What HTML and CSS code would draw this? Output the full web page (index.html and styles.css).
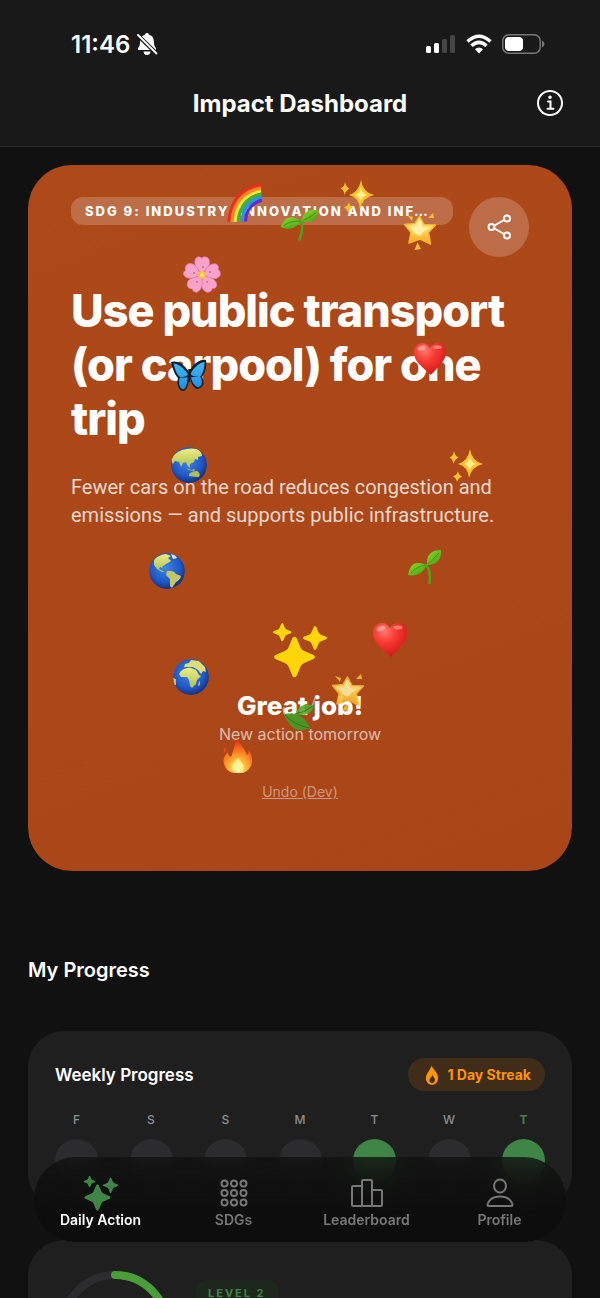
FILE: index.html
```html
<!DOCTYPE html>
<html lang="en">
<head>
    <meta charset="UTF-8">
    <meta name="viewport" content="width=device-width, initial-scale=1.0">
    <title>Impact Dashboard</title>
    <link rel="stylesheet" href="styles.css">
</head>
<body>
    <!-- shared shapes -->
    <svg class="defs" aria-hidden="true">
        <defs>
            <linearGradient id="gold" x1="0" y1="0" x2="0" y2="1">
                <stop offset="0" stop-color="#fff3b8"/>
                <stop offset=".5" stop-color="#ffd95a"/>
                <stop offset="1" stop-color="#f7a51c"/>
            </linearGradient>
            <radialGradient id="sea" cx=".45" cy=".4" r=".6">
                <stop offset="0" stop-color="#3f86e8"/>
                <stop offset=".7" stop-color="#1f56c4"/>
                <stop offset="1" stop-color="#14317e"/>
            </radialGradient>
            <linearGradient id="land" x1="0" y1="0" x2="0" y2="1">
                <stop offset="0" stop-color="#f0ee7e"/>
                <stop offset="1" stop-color="#a9bd5a"/>
            </linearGradient>
            <radialGradient id="red" cx=".35" cy=".25" r=".8">
                <stop offset="0" stop-color="#ff7a6e"/>
                <stop offset=".4" stop-color="#f93b33"/>
                <stop offset="1" stop-color="#cf1417"/>
            </radialGradient>
            <linearGradient id="leafgreen" x1="0" y1="0" x2="1" y2="1">
                <stop offset="0" stop-color="#8fdc2c"/>
                <stop offset="1" stop-color="#3f9c12"/>
            </linearGradient>
            <radialGradient id="fire" cx=".5" cy=".9" r=".85">
                <stop offset="0" stop-color="#fffbc0"/>
                <stop offset=".3" stop-color="#ffc43a"/>
                <stop offset=".65" stop-color="#fb7a20"/>
                <stop offset="1" stop-color="#ea3417"/>
            </radialGradient>
            <linearGradient id="wing" x1="0" y1="0" x2="0" y2="1">
                <stop offset="0" stop-color="#45b9f5"/>
                <stop offset="1" stop-color="#1c8de0"/>
            </linearGradient>
            <clipPath id="round"><circle cx="18" cy="18" r="18"/></clipPath>
        </defs>
        <symbol id="star4" viewBox="-20 -20 40 40">
            <path d="M-2-18.500Q0-21.500 2-18.500L6-9Q7-7 9-6L18.500-2Q21.500 0 18.500 2L9 6Q7 7 6 9L2 18.500Q0 21.500-2 18.500L-6 9Q-7 7-9 6L-18.500 2Q-21.500 0-18.500-2L-9-6Q-7-7-6-9Z"/>
        </symbol>
        <symbol id="sparkles" viewBox="0 0 56 56">
            <use href="#star4" x="2" y="14.500" width="41" height="41"/>
            <use href="#star4" x="1" y="1" width="18.500" height="18.500"/>
            <use href="#star4" x="31" y="4" width="24" height="24"/>
        </symbol>
        <symbol id="glitter" viewBox="0 0 36 36">
            <g fill="#ffc02e">
                <path d="M21 0Q22.500 12 34 15Q23 17 20 29Q19 17.500 9 15Q19 12 21 0Z"/>
                <path d="M5 2Q6 7 9.500 8.500Q6 10 4.500 15Q4 10 .5 8.500Q4.500 7 5 2Z"/>
                <path d="M9 22Q9.500 26 13 27.500Q9.500 29 8 33Q7.500 29 4 27.500Q8 26 9 22Z"/>
            </g>
            <path fill="#fff08a" d="M21 7Q21.500 13 27 15Q21.500 16.500 20.500 22Q19.500 16.500 15 15Q20 13 21 7Z"/>
        </symbol>
        <symbol id="heart" viewBox="0 0 36 36">
            <path fill="url(#red)" d="M19 35C14 29 1 22 1 11C1 5 5 1 9.500 1C13 1 16.500 3 18 6.500C19.500 3 23 1 26.500 1C31 1 35 5 35 11C35 21 24 28 19 35Z"/>
            <ellipse cx="9" cy="6.500" rx="4.500" ry="2.500" fill="#ffb5ac" opacity=".7" transform="rotate(-20 9 6.500)"/>
            <ellipse cx="26" cy="5.500" rx="4.500" ry="2" fill="#ffb5ac" opacity=".55"/>
        </symbol>
        <symbol id="seedling" viewBox="0 0 36 36">
            <path fill="none" stroke="#4da31b" stroke-width="2.500" stroke-linecap="round" d="M19 16Q24 20 22.500 34"/>
            <path fill="url(#leafgreen)" d="M19.500 16C7 11 3 16 1 26C10 28 16 24 19.500 16Z"/>
            <path fill="url(#leafgreen)" d="M20 16C19 5 25 1 34 1C35 11 29 16 20 16Z"/>
            <path fill="none" stroke="#2f870e" stroke-width=".7" d="M19 16Q10 17 4 24M21 15Q26 11 32 4"/>
        </symbol>
        <symbol id="glowstar" viewBox="0 0 36 38">
            <path fill="url(#gold)" stroke="#f9b52e" stroke-width="1.500" stroke-linejoin="round" d="M17.500 4L22 12.500L33.500 13L26.500 20.500L28.500 32L18 27L7 31L9 20.500L2.500 12.500L13 11.500Z"/>
            <path fill="#fff5bd" d="M17.500 8L20 15L27 16L21.500 20L18 24L12 21L9 15L15 14Z" opacity=".8"/>
            <g fill="#ffbb3c"><path d="M5 3L11 5L10 9Z"/><path d="M26 6L31 1L32 6Z"/><path d="M12.500 38L15.500 30.500L19 37Z"/></g>
        </symbol>
        <symbol id="flame" viewBox="0 0 512 512">
            <path d="M250 10C262 95 398 178 410 306C420 436 342 506 256 506C170 506 92 436 102 312C108 240 140 210 170 165C196 120 222 65 250 10ZM258 462C308 462 336 416 326 366C318 322 286 304 270 258C254 306 204 330 194 376C184 424 214 462 258 462Z" fill-rule="evenodd"/>
        </symbol>
    </svg>

    <div class="app">
        <header class="top">
            <div class="status">
                <div class="status-left">
                    <span class="time">11:46</span>
                    <svg width="22" height="22" viewBox="0 0 22 22">
                        <path fill="#fff" d="M11 0C12.500 0 13 1 13 1.700C16.500 2.600 17.700 5 17.900 8.500C18.100 12.500 18.500 13.500 20 15V17H2V15C3.500 13.500 3.900 12.500 4.100 8.500C4.300 5 5.500 2.600 9 1.700C9 1 9.500 0 11 0ZM7.500 18.500H14.500Q14 22 11 22Q8 22 7.500 18.500Z"/>
                        <path stroke="#191919" stroke-width="4" d="M1.500 2L20 20"/>
                        <path stroke="#fff" stroke-width="1.800" stroke-linecap="round" d="M2 2L20.500 20.500"/>
                    </svg>
                </div>
                <div class="status-right">
                    <svg width="30" height="20" viewBox="0 0 30 20">
                        <g fill="#fff"><rect x="0" y="12" width="5" height="7" rx="1.500"/><rect x="8" y="9" width="5" height="10" rx="1.500"/></g>
                        <g fill="#464646"><rect x="16" y="5" width="5" height="14" rx="1.500"/><rect x="24" y="1" width="5" height="18" rx="1.500"/></g>
                    </svg>
                    <svg width="26" height="20" viewBox="0 0 26 20">
                        <g fill="none" stroke="#fff" stroke-width="3.500"><path d="M1.500 7.500Q13-3 24.500 7.500"/><path d="M5.500 11.800Q13 5 20.500 11.800"/></g>
                        <path fill="#fff" d="M9 15.300Q13 11.700 17 15.300L13 19.500Z"/>
                    </svg>
                    <svg width="43" height="20" viewBox="0 0 43 20">
                        <rect x=".75" y=".75" width="37.500" height="18.500" rx="6" fill="none" stroke="#777" stroke-width="1.500"/>
                        <rect x="3" y="3" width="18" height="14" rx="4" fill="#fff"/>
                        <path fill="#777" d="M40 6.500Q42.500 7.500 42.500 10T40 13.500Z"/>
                    </svg>
                </div>
            </div>
            <div class="title-bar">
                <h1>Impact Dashboard</h1>
                <button class="info" aria-label="Info">
                    <svg width="28" height="28" viewBox="0 0 28 28" fill="none" stroke="#fff" stroke-width="2" stroke-linecap="round">
                        <circle cx="14" cy="14" r="12"/>
                        <path d="M12 12.500H14.500V19.500M11.500 19.800H17.500"/>
                        <circle cx="14" cy="8.300" r=".8" fill="#fff"/>
                    </svg>
                </button>
            </div>
        </header>

        <main>
            <section class="action-card">
                <div class="card-head">
                    <span class="badge">SDG 9: INDUSTRY, INNOVATION AND INF…</span>
                    <button class="share" aria-label="Share">
                        <svg width="26" height="26" viewBox="-1 0 26 26" fill="none" stroke="#fff" stroke-width="2">
                            <circle cx="4.500" cy="13" r="3"/><circle cx="20" cy="4.500" r="3"/><circle cx="20" cy="21.500" r="3"/>
                            <path d="M7.500 11.500L17 6M7.500 14.500L17 20"/>
                        </svg>
                    </button>
                </div>
                <h2>Use public transport (or carpool) for one trip</h2>
                <p class="desc">Fewer cars on the road reduces congestion and emissions — and supports public infrastructure.</p>
                <div class="done">
                    <svg class="done-icon" width="56" height="56"><use href="#sparkles"/></svg>
                    <strong>Great job!</strong>
                    <span>New action tomorrow</span>
                    <button class="undo">Undo (Dev)</button>
                </div>

                <!-- confetti floating over the card -->
                <div class="confetti" aria-hidden="true">
                    <svg class="c-rainbow" width="36" height="42" viewBox="0 0 36 42" fill="none" stroke-width="3.200">
                        <path stroke="#ee2b22" d="M2 40Q4 8 34 3"/>
                        <path stroke="#fb8a1e" d="M5 40Q7 11 34 6"/>
                        <path stroke="#fde338" d="M8 40Q10 14 34 9"/>
                        <path stroke="#35b837" d="M11.500 39.500Q13 17 34.500 12"/>
                        <path stroke="#2596ea" d="M15 39.500Q16 20 35 15"/>
                        <path stroke="#5a2fd6" d="M18.500 39.500Q19 23 35 18"/>
                    </svg>
                    <svg class="c-seed-a" width="36" height="36"><use href="#seedling"/></svg>
                    <svg class="c-glitter-a" width="36" height="36"><use href="#glitter"/></svg>
                    <svg class="c-star-a" width="36" height="38"><use href="#glowstar"/></svg>
                    <svg class="c-flower" width="38" height="38" viewBox="-19 -19 38 38">
                        <g fill="#f9a3cb" stroke="#e67bb0" stroke-width=".7">
                            <path id="petal" d="M0-2C-6-6-9-12-6-17Q-3-19.500-.5-17Q3-19.500 6-17C10-12 6-6 0-2Z"/>
                            <use href="#petal" transform="rotate(72)"/>
                            <use href="#petal" transform="rotate(144)"/>
                            <use href="#petal" transform="rotate(216)"/>
                            <use href="#petal" transform="rotate(288)"/>
                        </g>
                        <g fill="#c2387e">
                            <circle cx="1" cy="-8" r=".8"/><circle cx="8" cy="-3" r=".8"/><circle cx="5" cy="7" r=".8"/><circle cx="-5" cy="7" r=".8"/><circle cx="-8" cy="-2" r=".8"/>
                        </g>
                        <circle r="4" fill="#f6bd47"/><circle r="2" fill="#ffe07a"/>
                    </svg>
                    <svg class="c-butterfly" width="38" height="34" viewBox="0 0 38 34">
                        <path fill="#10202e" d="M19 13C14 5 7 1 1 3C3 11 5 16 8 19C6 25 9 33 14 32C18 30 19 23 19.500 18C21 23 23 30 28 30C34 28 35 23 32 18C35 14 37 8 36 1C30 0 23 5 19 13Z"/>
                        <path fill="url(#wing)" d="M18 15C13 8 8 5 3.500 4.500C5 11 7 16 10 18C14 18 17 17.500 18 15ZM17.500 18C14 19 11 18 9.500 19C8 25 10 30 13.500 30.500C17 28 17.500 22 17.500 18ZM20.500 15C24 8 29 4 34.500 3C34.500 10 33 14 30 18C26 17.500 22 17.500 20.500 15ZM21 18C24 18.500 28 17 30.500 18C33 23 32 27 28 28.500C23 26 22 22 21 18Z"/>
                        <path fill="#17191c" d="M18.200 10L20.800 10L20.500 23L19 23Z"/>
                    </svg>
                    <svg class="c-heart-a" width="34" height="36"><use href="#heart"/></svg>
                    <svg class="c-asia" width="36" height="36" viewBox="0 0 36 36">
                        <g clip-path="url(#round)">
                            <circle cx="18" cy="18" r="18" fill="url(#sea)"/>
                            <path fill="url(#land)" d="M3 8Q12 0 26 2Q31 5 31 9L27 10L27 13L24 12L23 15L19 17L19 21L16 18L15 15L12 16L10 20L8 15L4 14L2 17L0 13Z"/>
                            <path fill="#b3bd56" d="M18 27Q21 24 26 24Q30 26 28 30Q23 30 18 29Z"/>
                            <path fill="#a6b55c" d="M16 21L20 23L24 22L23 24L17 23Z"/>
                        </g>
                    </svg>
                    <svg class="c-glitter-b" width="36" height="36"><use href="#glitter"/></svg>
                    <svg class="c-america" width="36" height="36" viewBox="0 0 36 36">
                        <g clip-path="url(#round)">
                            <circle cx="18" cy="18" r="18" fill="url(#sea)"/>
                            <path fill="url(#land)" d="M5 7Q9 2 17 1L22 3L19 5L22 8L17 11L14 13L13 15L11 14L10 16L14 18L16 19L13 19L8 16L5 12Z"/>
                            <path fill="#c3c765" d="M18 18Q24 17 27 21L32 23Q31 27 27 29L23 35L21 33L21 26L17 22Z"/>
                            <path fill="#dfe9c5" d="M22 1Q27 2 28 5L24 6Z"/>
                        </g>
                    </svg>
                    <svg class="c-seed-b" width="36" height="36"><use href="#seedling"/></svg>
                    <svg class="c-heart-b" width="36" height="36"><use href="#heart"/></svg>
                    <svg class="c-africa" width="36" height="36" viewBox="0 0 36 36">
                        <g clip-path="url(#round)">
                            <circle cx="18" cy="18" r="18" fill="url(#sea)"/>
                            <path fill="url(#land)" d="M8 12Q13 8 18 9L23 11L26 16L28 17L24 21L23 25L19 29L17 27L16 21L14 18L8 18L6 15Z"/>
                            <path fill="#dcdf79" d="M11 8L12 5L16 4L18 1L26 2L32 8L33 13L30 12L28 15L25 11L20 8L15 8Z"/>
                            <path fill="#bcc65f" d="M0 19L3 20L3 26L1 26ZM26 23L27 22L27 26L25 27Z"/>
                        </g>
                    </svg>
                    <svg class="c-star-b" width="36" height="38"><use href="#glowstar"/></svg>
                    <svg class="c-leaves" width="36" height="36" viewBox="0 0 36 36">
                        <path fill="none" stroke="#b9b39a" stroke-width="1.500" d="M34 1Q32 8 29 13M3 10Q1 15 6 21"/>
                        <path fill="#57ab2f" d="M14 17Q20 4 33 9Q29 21 14 17Z"/>
                        <path fill="#449d28" d="M3 17Q21 13 29 31Q11 39 3 17Z"/>
                        <path fill="none" stroke="#2c7718" stroke-width="1" d="M14 17Q23 16 32 9M4 18Q13 28 28 31"/>
                    </svg>
                    <svg class="c-fire" width="30" height="36" viewBox="0 0 30 36">
                        <path fill="url(#fire)" d="M14 1C17 7 22 10 24 17Q26 15 26 12Q31 20 28 28Q24 36 15 35Q4 36 1 26Q-1 19 5 14Q5 18 8 19C11 12 11 7 14 1Z"/>
                        <path fill="#f04b20" d="M2 9Q4 12 1 15Q0 12 2 9Z"/>
                        <path fill="#fff6a0" opacity=".8" d="M15 20Q24 29 19 33Q14 35 10 32Q7 27 15 20Z"/>
                    </svg>
                </div>
            </section>

            <h3 class="section-title">My Progress</h3>

            <section class="panel weekly">
                <div class="weekly-head">
                    <h4>Weekly Progress</h4>
                    <span class="streak"><svg width="20" height="20" fill="#ff9500"><use href="#flame"/></svg>1 Day Streak</span>
                </div>
                <ul class="days">
                    <li>F<i></i></li>
                    <li>S<i></i></li>
                    <li>S<i></i></li>
                    <li>M<i></i></li>
                    <li class="hit">T<i></i></li>
                    <li>W<i></i></li>
                    <li class="hit today">T<i></i></li>
                </ul>
            </section>

            <section class="panel level">
                <svg width="120" height="120" viewBox="0 0 120 120" fill="none" stroke-width="8">
                    <circle cx="60" cy="60" r="52" stroke="#2c2c2e"/>
                    <path stroke="#4a9e38" stroke-linecap="round" d="M60 8A52 52 0 0 1 112 60"/>
                </svg>
                <span class="level-chip">LEVEL 2</span>
            </section>
        </main>

        <nav class="tabs">
            <a href="#" class="active">
                <svg width="36" height="36" fill="#3f8545"><use href="#sparkles"/></svg>
                Daily Action
            </a>
            <a href="#">
                <svg width="36" height="36" viewBox="0 0 36 36" fill="none" stroke="#777" stroke-width="2">
                    <circle cx="8.500" cy="8.500" r="3"/><circle cx="18" cy="8.500" r="3"/><circle cx="27.500" cy="8.500" r="3"/>
                    <circle cx="8.500" cy="18" r="3"/><circle cx="18" cy="18" r="3"/><circle cx="27.500" cy="18" r="3"/>
                    <circle cx="8.500" cy="27.500" r="3"/><circle cx="18" cy="27.500" r="3"/><circle cx="27.500" cy="27.500" r="3"/>
                </svg>
                SDGs
            </a>
            <a href="#">
                <svg width="36" height="36" viewBox="0 0 36 36" fill="none" stroke="#777" stroke-width="2" stroke-linejoin="round">
                    <rect x="3" y="11" width="10" height="20" rx="1"/><rect x="13" y="5" width="10" height="26" rx="1"/><rect x="23" y="15" width="10" height="16" rx="1"/>
                </svg>
                Leaderboard
            </a>
            <a href="#">
                <svg width="36" height="36" viewBox="0 0 36 36" fill="none" stroke="#777" stroke-width="2" stroke-linejoin="round">
                    <ellipse cx="18" cy="11" rx="6" ry="6.500"/>
                    <path d="M18 21.500C10 21.500 6 26 5.500 29.500Q5.500 31 7 31H29Q30.500 31 30.500 29.500C30 26 26 21.500 18 21.500Z"/>
                </svg>
                Profile
            </a>
        </nav>
    </div>
</body>
</html>
```

FILE: styles.css
```css
* {
    padding: 0;
    margin: 0;
    box-sizing: border-box;
}

body {
    background: #111;
    color: #fff;
    font-family: Inter, "Liberation Sans", sans-serif;
}

button {
    border: none;
    background: none;
    color: inherit;
    font-family: inherit;
    cursor: pointer;
}

svg {
    display: block;
    flex: none;
}

.defs {
    position: absolute;
    width: 0;
    height: 0;
}

.app {
    height: 100vh;
    overflow-y: auto;
    scrollbar-width: none;
}

/* header */
.top {
    background: #191919;
    border-bottom: 1px solid #292929;
    padding-top: 28px;
}

.status {
    display: flex;
    justify-content: space-between;
    align-items: center;
    height: 32px;
    padding: 0 55px 0 71px;
}

.status-left,
.status-right {
    display: flex;
    align-items: center;
    gap: 10px;
}

.status-left {
    gap: 6px;
}

.time {
    font-size: 24px;
    font-weight: 600;
}

.title-bar {
    display: grid;
    grid-template-columns: 1fr auto 1fr;
    align-items: center;
    height: 86px;
    padding: 0 36px;
}

.title-bar h1 {
    grid-column: 2;
    font-size: 24px;
    font-weight: 700;
}

.info {
    justify-self: end;
}

main {
    padding: 18px 28px;
}

/* action card */
.action-card {
    position: relative;
    padding: 32px 43px 69px;
    border-radius: 44px;
    background: linear-gradient(160deg, #ae4a19, #a94517);
}

.card-head {
    display: flex;
    align-items: flex-start;
    gap: 16px;
}

.badge {
    flex: 1;
    min-width: 0;
    padding: 0 14px;
    border-radius: 12px;
    background: rgba(255, 255, 255, .2);
    font-size: 13px;
    font-weight: 800;
    line-height: 28px;
    letter-spacing: 2px;
    white-space: nowrap;
    overflow: hidden;
}

.share {
    display: flex;
    align-items: center;
    justify-content: center;
    width: 60px;
    height: 60px;
    border-radius: 50%;
    background: rgba(255, 255, 255, .2);
}

.action-card h2 {
    margin-top: 27px;
    font-size: 45px;
    font-weight: 800;
    line-height: 54px;
    letter-spacing: -1px;
}

.desc {
    margin-top: 27px;
    color: rgba(255, 255, 255, .8);
    font-family: Roboto, Inter, sans-serif;
    font-size: 20px;
    line-height: 28px;
}

.done {
    display: flex;
    flex-direction: column;
    align-items: center;
    margin-top: 93px;
}

.done-icon {
    fill: #ffd60a;
}

.done strong {
    margin-top: 12px;
    font-size: 26px;
    font-weight: 800;
    line-height: 32px;
}

.done span {
    color: rgba(255, 255, 255, .65);
    font-size: 16px;
    line-height: 24px;
}

.undo {
    margin-top: 36px;
    color: rgba(255, 255, 255, .45);
    font-size: 14px;
    line-height: 20px;
    text-decoration: underline;
}

.confetti svg {
    position: absolute;
}

.c-rainbow { left: 199px; top: 17px; }
.c-seed-a { left: 253px; top: 40px; transform: rotate(14deg); }
.c-glitter-a { left: 312px; top: 15px; }
.c-star-a { left: 374px; top: 47px; }
.c-flower { left: 155px; top: 91px; }
.c-butterfly { left: 142px; top: 194px; }
.c-heart-a { left: 385px; top: 176px; }
.c-asia { left: 143px; top: 282px; }
.c-glitter-b { left: 421px; top: 284px; }
.c-america { left: 121px; top: 388px; }
.c-seed-b { left: 379px; top: 384px; }
.c-heart-b { left: 344px; top: 457px; }
.c-africa { left: 145px; top: 494px; }
.c-star-b { left: 302px; top: 508px; opacity: .9; }
.c-leaves { left: 253px; top: 532px; opacity: .9; }
.c-fire { left: 195px; top: 573px; }

/* progress */
.section-title {
    margin: 84px 0 46px;
    font-size: 20px;
    font-weight: 600;
    line-height: 30px;
}

.panel {
    margin-bottom: 31px;
    padding: 27px;
    border-radius: 36px;
    background: #1f1f1f;
}

.weekly-head {
    display: flex;
    justify-content: space-between;
    align-items: center;
}

.weekly-head h4 {
    font-size: 17px;
    font-weight: 600;
}

.streak {
    display: flex;
    align-items: center;
    gap: 6px;
    height: 33px;
    padding: 0 14px;
    border-radius: 17px;
    background: #402d19;
    color: #ff9500;
    font-size: 14px;
    font-weight: 700;
}

.days {
    display: flex;
    justify-content: space-between;
    margin-top: 20px;
    list-style: none;
    color: #8e8e93;
    font-size: 12px;
    font-weight: 500;
    line-height: 18px;
    text-align: center;
}

.days i {
    display: block;
    width: 43px;
    height: 43px;
    margin-top: 10px;
    border-radius: 50%;
    background: #2c2c2e;
}

.days .hit i {
    background: #3f8545;
}

.days .today {
    color: #3f8545;
    font-weight: 700;
}

.level {
    display: flex;
    align-items: flex-start;
    gap: 21px;
}

.level-chip {
    margin-top: 13px;
    padding: 0 12px;
    border-radius: 9px;
    background: #1d271e;
    color: #3f8545;
    font-size: 11px;
    font-weight: 700;
    line-height: 26px;
    letter-spacing: 2px;
}

/* tab bar */
.tabs {
    position: fixed;
    right: 34px;
    bottom: 56px;
    left: 34px;
    display: flex;
    height: 85px;
    border-radius: 42px;
    background: linear-gradient(rgba(14, 14, 14, .72), rgba(13, 13, 13, .98) 80%);
    backdrop-filter: blur(16px);
}

.tabs a {
    flex: 1;
    display: flex;
    flex-direction: column;
    align-items: center;
    padding-top: 18px;
    color: #777;
    font-size: 14px;
    font-weight: 600;
    line-height: 18px;
    text-decoration: none;
}

.tabs .active {
    color: #fff;
}
```
